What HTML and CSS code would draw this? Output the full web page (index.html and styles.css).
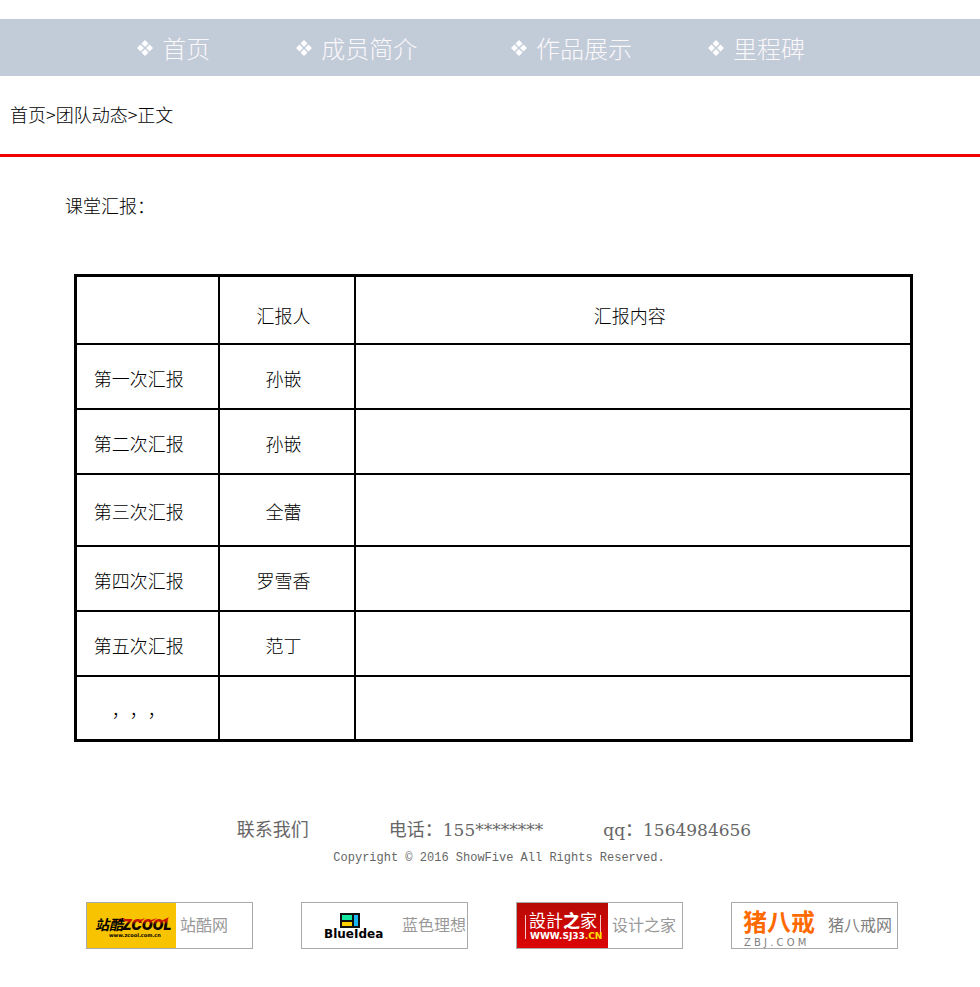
FILE: index.html
```html
<!DOCTYPE html>
<html lang="zh-CN">
<head>
  <meta charset="UTF-8" />
  <title>课堂汇报</title>
  <meta name="viewport" content="width=device-width, initial-scale=1.0" />
  <link rel="stylesheet" href="styles.css">
</head>
<body>
  <svg width="0" height="0" class="defs">
    <symbol id="diamonds" viewBox="0 0 16 16">
      <path d="M8 0l3.500 3.500L8 7 4.500 3.500zM8 9l3.500 3.500L8 16l-3.500-3.500zM3.500 4.500L7 8l-3.500 3.500L0 8zM12.500 4.500L16 8l-3.500 3.500L9 8z" fill="#fff" />
    </symbol>
  </svg>

  <nav class="nav">
    <a href="#"><svg class="dot"><use href="#diamonds" /></svg>首页</a>
    <a href="#"><svg class="dot"><use href="#diamonds" /></svg>成员简介</a>
    <a href="#"><svg class="dot"><use href="#diamonds" /></svg>作品展示</a>
    <a href="#"><svg class="dot"><use href="#diamonds" /></svg>里程碑</a>
  </nav>

  <div class="crumbs"><a href="#">首页</a>&gt;<a href="#">团队动态</a>&gt;<span>正文</span></div>

  <main class="content">
    <h1>课堂汇报：</h1>
    <table class="report">
      <colgroup>
        <col class="col-no"><col class="col-name"><col>
      </colgroup>
      <tr class="head"><th></th><th>汇报人</th><th>汇报内容</th></tr>
      <tr><td>第一次汇报</td><td>孙嵌</td><td></td></tr>
      <tr><td>第二次汇报</td><td>孙嵌</td><td></td></tr>
      <tr class="tall"><td>第三次汇报</td><td>全蕾</td><td></td></tr>
      <tr><td>第四次汇报</td><td>罗雪香</td><td></td></tr>
      <tr><td>第五次汇报</td><td>范丁</td><td></td></tr>
      <tr><td>，，，</td><td></td><td></td></tr>
    </table>
  </main>

  <footer class="footer">
    <div class="contact">
      <span class="us">联系我们</span>
      <span>电话：<span class="num">155********</span></span>
      <span><span class="num">qq</span>：<span class="num">1564984656</span></span>
    </div>
    <p class="copy">Copyright © 2016 ShowFive All Rights Reserved.</p>

    <div class="links">
      <a href="#">
        <svg class="logo" width="89" height="45" viewBox="0 0 89 45">
          <defs>
            <linearGradient id="flame" x1="0" y1="0" x2="0" y2="1">
              <stop offset="0.3" stop-color="#c81600" />
              <stop offset="0.5" stop-color="#140400" />
            </linearGradient>
          </defs>
          <rect width="89" height="45" fill="#f8c300" />
          <path d="M26 17l12-2-3 3zM50 18l8-3-3 3zM61 18l9-3-4 3zM74 18l8-4-3 5z" fill="#d81800" />
          <text x="8" y="27" class="zcool-cn">站酷</text>
          <text x="35" y="27" class="zcool-en" fill="url(#flame)">ZCOOL</text>
          <text x="22" y="34" class="zcool-url">www.zcool.com.cn</text>
        </svg>
        <span>站酷网</span>
      </a>
      <a href="#">
        <svg class="logo" width="96" height="45" viewBox="0 0 96 45">
          <rect x="38" y="10" width="20" height="15" fill="#111" />
          <rect x="40" y="12" width="10" height="5" fill="#12e8a0" />
          <rect x="40" y="19" width="10" height="4" fill="#ffd200" />
          <rect x="52" y="12" width="4" height="11" fill="#19b8f5" />
          <text x="22" y="35" class="blueidea">BlueIdea</text>
        </svg>
        <span>蓝色理想</span>
      </a>
      <a href="#">
        <svg class="logo" width="91" height="45" viewBox="0 0 91 45">
          <defs>
            <linearGradient id="red" x1="0" y1="0" x2="0" y2="1">
              <stop offset="0" stop-color="#b80a05" />
              <stop offset="1" stop-color="#dc0505" />
            </linearGradient>
          </defs>
          <rect width="91" height="45" fill="url(#red)" />
          <path d="M8.500 12v24M83.500 12v24" stroke="#f3c9c5" />
          <text x="12" y="24" class="sj-cn">設計<tspan class="sj-zhi">之</tspan>家</text>
          <text x="13" y="36" class="sj-url">WWW.SJ33<tspan fill="#ffe000">.CN</tspan></text>
        </svg>
        <span>设计之家</span>
      </a>
      <a href="#" class="zbj">
        <svg class="logo" width="92" height="45" viewBox="0 0 92 45">
          <text x="11" y="28" class="zbj-cn">猪八戒</text>
          <text x="12" y="43" class="zbj-url">Z B J . C O M</text>
        </svg>
        <span>猪八戒网</span>
      </a>
    </div>
  </footer>
</body>
</html>
```

FILE: styles.css
```css
body {
  margin: 0;
  padding-top: 19px;
  font-family: 'Noto Sans CJK SC', sans-serif;
  font-size: 18px;
  font-weight: 300;
  line-height: 24px;
  text-spacing-trim: space-all;
  background: #fff;
  color: #000;
}

a {
  color: inherit;
  text-decoration: none;
}

.defs {
  position: absolute;
}

.nav {
  display: grid;
  grid-template-columns: 159fr 215fr 197fr 272fr;
  padding: 13px 0 12px 14%;
  background: #c2cbd8;
  color: #fbf8fa;
  font-size: 24px;
  line-height: 32px;
}

.nav a {
  display: flex;
  align-items: center;
  gap: 9px;
}

.dot {
  width: 16px;
  height: 16px;
}

.crumbs {
  padding: 26px 10px 28px;
  border-bottom: 3px solid #f00000;
}

.content {
  padding: 36px 67px 0 65px;
}

h1 {
  margin: 0 0 57px;
  font-size: 18px;
  font-weight: 300;
}

.report {
  width: calc(100% - 9px);
  margin-left: 9px;
  table-layout: fixed;
  border-collapse: collapse;
  border: 3px solid #000;
}

.col-no {
  width: 143px;
}

.col-name {
  width: 136px;
}

.report th,
.report td {
  box-sizing: border-box;
  height: 65px;
  padding: 3px 6px 0 0;
  border: 2px solid #000;
  font-weight: 300;
  text-align: center;
}

.report td:first-child {
  padding-right: 17px;
}

.report .head th {
  height: 68px;
  padding-top: 10px;
}

.report .tall td {
  height: 72px;
}

.footer {
  padding: 74px 0 38px;
  color: #666;
  font-weight: 400;
}

.contact {
  display: flex;
  justify-content: center;
  gap: 60px;
  padding-left: 8px;
}

.us {
  margin-right: 20px;
}

.num {
  font-family: 'DejaVu Serif', serif;
  font-size: 17px;
}

.copy {
  margin: 6px 0 0;
  padding-left: 18px;
  font-family: 'Liberation Mono', monospace;
  font-size: 12px;
  line-height: 20px;
  text-align: center;
}

.links {
  display: flex;
  justify-content: center;
  gap: 48px;
  margin-top: 34px;
  padding-left: 4px;
}

.links a {
  display: flex;
  box-sizing: border-box;
  width: 167px;
  border: 1px solid #aaa;
  color: #999;
  font-size: 16px;
  line-height: 42px;
  white-space: nowrap;
}

.links span {
  margin-left: 4px;
}

.links .zbj {
  color: #808080;
}

.logo {
  flex: none;
}

.zcool-cn {
  font: italic bold 14px 'Noto Sans CJK SC', sans-serif;
}

.zcool-en {
  font: italic 900 14px Inter, sans-serif;
}

.zcool-url {
  font: bold 5px 'DejaVu Sans', sans-serif;
}

.blueidea {
  font: bold 12px 'DejaVu Sans', sans-serif;
}

.sj-cn {
  font: 17px 'Noto Sans CJK TC', sans-serif;
  fill: #fff;
}

.sj-zhi {
  font-weight: 900;
}

.sj-url {
  font: bold 9px 'DejaVu Sans', sans-serif;
  fill: #fff;
}

.zbj-cn {
  font: bold 24px 'Noto Sans CJK SC', sans-serif;
  fill: #ff6a00;
}

.zbj-url {
  font: 10px 'DejaVu Sans', sans-serif;
  fill: #808080;
}
```
